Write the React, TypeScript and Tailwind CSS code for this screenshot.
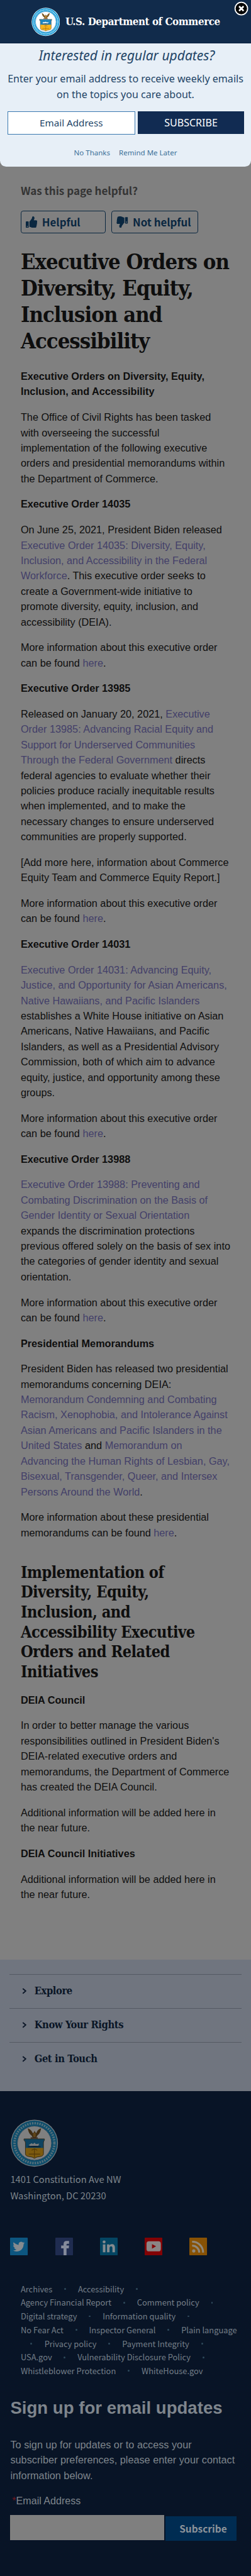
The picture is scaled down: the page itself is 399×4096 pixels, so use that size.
import React from "react";
import { FaThumbsUp, FaThumbsDown } from "react-icons/fa";

const sans = "font-['Liberation_Sans',Arial,sans-serif]";
const serif = "font-['DejaVu_Serif_Condensed','DejaVu_Serif',serif]";
const source = "font-['Noto_Sans_CJK_JP','Noto_Sans',sans-serif]";
const open = "font-['Noto_Sans','Open_Sans',sans-serif]";

function Seal({ id, className }: { id: string; className: string }) {
  return (
    <svg viewBox="0 0 100 100" className={className} aria-hidden="true">
      <circle cx="50" cy="50" r="49.5" fill="#e9f6fc" />
      <circle cx="50" cy="50" r="42" fill="none" stroke="#1a9ad6" strokeWidth="11.5" />
      <circle cx="50" cy="50" r="42" fill="none" stroke="#a9def5" strokeWidth="5" strokeDasharray="3 2.2" />
      <circle cx="50" cy="50" r="36.3" fill="#ffffff" />
      <circle cx="50" cy="50" r="36" fill="none" stroke="#1672ab" strokeWidth="1" />
      <path d="M36 19 C39 20 44 23 46.500 29 L49 27 L50 24 L52 27 L54 29 C56 23 60 20 64 19 C63 25 61 31 56 34 L54 38 H46 L44 34 C39 31 37 25 36 19 Z" fill="#7d5a28" />
      <path d="M47 30 L50 27 L53 30 L52 37 H48 Z" fill="#c08a30" />
      <rect x="42" y="38" width="15" height="2.200" fill="#6b3f1c" />
      <clipPath id={id}>
        <path d="M28 41 H71 V44 Q69 46 69 49 V72 Q69 77 63 78 Q53 79 50 82 Q47 79 37 78 Q31 77 31 72 V49 Q31 46 28 44 Z" />
      </clipPath>
      <g clipPath={`url(#${id})`}>
        <rect x="26" y="40" width="48" height="21" fill="#1c86c0" />
        <rect x="26" y="60" width="48" height="24" fill="#f7b51e" />
        <path d="M38 54 L44 50 L47 52 L50 49 L53 52 L60 51 L58 56 H41 Z" fill="#f2f6f8" />
        <path d="M36 57 Q50 54 63 57 V58.500 H36 Z" fill="#123f66" />
        <path d="M50 62 V80 M44 65 L50 62 L56 65 M38 73 H62" stroke="#a06c12" strokeWidth="1.500" fill="none" />
      </g>
      <path d="M28 41 H71 V44 Q69 46 69 49 V72 Q69 77 63 78 Q53 79 50 82 Q47 79 37 78 Q31 77 31 72 V49 Q31 46 28 44 Z" fill="none" stroke="#5a4a2a" strokeWidth="1.200" />
    </svg>
  );
}

function Popup() {
  return (
    <div className={`absolute inset-x-0 top-0 h-[274px] overflow-hidden rounded-b-[10px] bg-[#e7eff7] text-[#234567] ${open}`}>
      <div className="flex h-[71px] items-center border-b-2 border-[#0c2140] bg-[#112b4b] pl-[51.500px]">
        <Seal id="popup-shield" className="mt-[2px] h-[47px] w-[47px] shrink-0" />
        <span className={`ml-[9px] mt-[1px] whitespace-nowrap text-[17.400px] font-bold leading-6 tracking-[-0.450px] text-white ${serif}`}>
          U.S. Department of Commerce
        </span>
      </div>
      <svg viewBox="0 0 24 24" className="absolute right-[4px] top-[2px] h-6 w-6" role="img" aria-label="Close">
        <circle cx="12" cy="12" r="10.300" fill="#000" stroke="#fff" strokeWidth="1.800" />
        <path d="M8.300 8.300 L15.700 15.700 M15.700 8.300 L8.300 15.700" stroke="#fff" strokeWidth="2.800" />
      </svg>
      <p className="mt-[5px] pl-[4px] text-center text-[21.700px] italic leading-[30px]">Interested in regular updates?</p>
      <p className="mt-[11px] text-center text-[16.600px] leading-[25.400px]">
        Enter your email address to receive weekly emails
        <br />
        on the topics you care about.
      </p>
      <div className="mt-[15.500px] flex gap-[4px] pl-[12px] text-center text-[15.700px] leading-[36px]">
        <div className="h-[38px] w-[210px] border border-[#3b79b0] bg-white">Email Address</div>
        <div className="h-[37px] w-[175px] bg-[#112b52] text-[16.600px] leading-[38px] text-white">SUBSCRIBE</div>
      </div>
      <div className="mt-[19.500px] flex justify-center gap-[14.500px] text-[11.900px] leading-5 text-[#3d7199]">
        <span>No Thanks</span>
        <span>Remind Me Later</span>
      </div>
    </div>
  );
}

const A = ({ children }: { children: React.ReactNode }) => <a className="text-[#433f69]">{children}</a>;
const B = ({ children }: { children: React.ReactNode }) => <p className="font-bold">{children}</p>;

function MoreInfo() {
  return (
    <p>
      More information about this executive order can be found <A>here</A>.
    </p>
  );
}

function Article() {
  return (
    <main className="h-[3218px] pl-[34px] pr-[33px] pt-[301px] text-[#0e0e0e]">
      <h2 className={`text-[17.600px] font-bold leading-6 text-[#343434] ${source}`}>Was this page helpful?</h2>
      <div className={`mt-[21px] flex gap-[9px] text-[17.400px] font-bold leading-[33px] text-[#0a2740] ${source}`}>
        <div className="flex h-[37px] w-[140px] items-center rounded-[4px] border-2 border-[#0a2740] pl-[7px]">
          <FaThumbsUp className="mr-[8px] h-[19px] w-[19px]" />
          <span>Helpful</span>
        </div>
        <div className="flex h-[37px] w-[142px] items-center rounded-[4px] border-2 border-[#0a2740] pl-[7px]">
          <FaThumbsDown className="mr-[8px] h-[19px] w-[19px] -scale-x-100" />
          <span className="whitespace-nowrap">Not helpful</span>
        </div>
      </div>
      <h1 className={`mb-[23px] mt-[24.500px] whitespace-nowrap text-[35.500px] font-bold leading-[43.700px] tracking-[-1px] ${serif}`}>
        Executive Orders on
        <br />
        Diversity, Equity,
        <br />
        Inclusion and
        <br />
        Accessibility
      </h1>
      <div className={`flex flex-col gap-[16.800px] text-[16.800px] leading-[25.200px] ${sans}`}>
        <B>Executive Orders on Diversity, Equity, Inclusion, and Accessibility</B>
        <p>
          The Office of Civil Rights has been tasked with overseeing the successful implementation of the following
          executive orders and presidential memorandums within the Department of Commerce.
        </p>
        <B>Executive Order 14035</B>
        <p>
          On June 25, 2021, President Biden released{" "}
          <A>Executive Order 14035: Diversity, Equity, Inclusion, and Accessibility in the Federal Workforce</A>. This
          executive order seeks to create a Government-wide initiative to promote diversity, equity, inclusion, and
          accessibility (DEIA).
        </p>
        <MoreInfo />
        <B>Executive Order 13985</B>
        <p>
          Released on January 20, 2021,{" "}
          <A>
            Executive Order 13985: Advancing Racial Equity and Support for Underserved Communities Through the Federal
            Government
          </A>{" "}
          directs federal agencies to evaluate whether their policies produce racially inequitable results when
          implemented, and to make the necessary changes to ensure underserved communities are properly supported.
        </p>
        <p>[Add more here, information about Commerce Equity Team and Commerce Equity Report.]</p>
        <MoreInfo />
        <B>Executive Order 14031</B>
        <p>
          <A>
            Executive Order 14031: Advancing Equity, Justice, and Opportunity for Asian Americans, Native Hawaiians, and
            Pacific Islanders
          </A>{" "}
          establishes a White House initiative on Asian Americans, Native Hawaiians, and Pacific Islanders, as well as a
          Presidential Advisory Commission, both of which aim to advance equity, justice, and opportunity among these
          groups.
        </p>
        <MoreInfo />
        <B>Executive Order 13988</B>
        <p>
          <A>
            Executive Order 13988: Preventing and Combating Discrimination on the Basis of Gender Identity or Sexual
            Orientation
          </A>{" "}
          expands the discrimination protections previous offered solely on the basis of sex into the categories of
          gender identity and sexual orientation.
        </p>
        <MoreInfo />
        <B>Presidential Memorandums</B>
        <p>
          President Biden has released two presidential memorandums concerning DEIA:
          <br />
          <A>
            Memorandum Condemning and Combating Racism, Xenophobia, and Intolerance Against Asian Americans and Pacific
            Islanders in the United States
          </A>{" "}
          and{" "}
          <A>
            Memorandum on Advancing the Human Rights of Lesbian, Gay, Bisexual, Transgender, Queer, and Intersex Persons
            Around the World
          </A>
          .
        </p>
        <p>
          More information about these presidential memorandums can be found <A>here</A>.
        </p>
        <h2 className={`mt-[20px] whitespace-nowrap text-[26px] font-bold leading-[32.700px] tracking-[-0.540px] ${serif}`}>
          Implementation of
          <br />
          Diversity, Equity,
          <br />
          Inclusion, and
          <br />
          Accessibility Executive
          <br />
          Orders and Related
          <br />
          Initiatives
        </h2>
        <B>DEIA Council</B>
        <p>
          In order to better manage the various responsibilities outlined in President Biden's DEIA-related executive
          orders and memorandums, the Department of Commerce has created the DEIA Council.
        </p>
        <p>Additional information will be added here in the near future.</p>
        <B>DEIA Council Initiatives</B>
        <p>Additional information will be added here in the near future.</p>
      </div>
    </main>
  );
}

function FooterNav() {
  return (
    <nav className={`h-[216px] bg-[#70757f] px-4 pt-[24px] text-[17px] font-bold tracking-[-0.450px] text-[#0a1526] ${serif}`}>
      {["Explore", "Know Your Rights", "Get in Touch"].map((label) => (
        <div key={label} className="flex h-[55.800px] items-center border-t border-[#555a63] pb-[1px] pl-[20px]">
          <svg viewBox="0 0 8 10" className="mr-[12.500px] h-[10px] w-[8px]" aria-hidden="true">
            <path d="M1.300 1 L6 5 L1.300 9" fill="none" stroke="#0a1526" strokeWidth="1.900" />
          </svg>
          <span>{label}</span>
        </div>
      ))}
    </nav>
  );
}

const tile = "h-[29px] w-[29px] shrink-0";

function Social() {
  return (
    <div className="mt-[56px] flex gap-[44.600px]">
      <svg viewBox="0 0 29 29" className={tile} aria-label="Twitter">
        <rect width="29" height="29" rx="1" fill="#0d5680" />
        <g transform="translate(4.500 5) scale(0.820)">
          <path fill="#858b8f" d="M23.950 4.570a10 10 0 0 1-2.820.770 4.960 4.960 0 0 0 2.160-2.720c-.950.550-2 .950-3.130 1.180a4.920 4.920 0 0 0-8.380 4.480C7.690 8.090 4.070 6.130 1.640 3.160a4.820 4.820 0 0 0-.670 2.480c0 1.710.870 3.210 2.190 4.100a4.900 4.900 0 0 1-2.230-.620v.060a4.920 4.920 0 0 0 3.950 4.830 5 5 0 0 1-2.210.080 4.940 4.940 0 0 0 4.600 3.420A9.870 9.870 0 0 1 0 19.540a13.990 13.990 0 0 0 7.550 2.210c9.050 0 14-7.500 14-13.980 0-.210 0-.420-.020-.630a9.940 9.940 0 0 0 2.460-2.550z" />
        </g>
      </svg>
      <svg viewBox="0 0 29 29" className={tile} aria-label="Facebook">
        <rect width="29" height="29" rx="1" fill="#1f2c50" />
        <path d="M13.500 29 V17.500 H9.500 V13 H13.500 V10.500 Q13.500 5.500 18.500 5.500 H22.500 V10 H20 Q18.300 10 18.300 11.500 V13 H22.500 L22 17.500 H18.300 V29 Z" fill="#858b9b" />
      </svg>
      <svg viewBox="0 0 29 29" className={tile} aria-label="LinkedIn">
        <rect width="29" height="29" rx="1" fill="#044562" />
        <g fill="#858b8f">
          <circle cx="6.700" cy="7" r="2.400" />
          <path d="M4.700 11 H8.800 V24 H4.700 Z M11.500 11 H15.400 V12.800 Q16.700 10.700 19.600 10.700 Q24.500 10.700 24.500 16.500 V24 H20.400 V17.300 Q20.400 14.300 18.200 14.300 Q15.600 14.300 15.600 17.500 V24 H11.500 Z" />
        </g>
      </svg>
      <svg viewBox="0 0 29 29" className={tile} aria-label="YouTube">
        <rect width="29" height="29" rx="1" fill="#830305" />
        <rect x="3" y="6" width="23.500" height="16.500" rx="4" fill="#8b8585" />
        <path d="M12 10.500 L18.700 14.300 L12 18.100 Z" fill="#830305" />
      </svg>
      <svg viewBox="0 0 29 29" className={tile} aria-label="RSS">
        <rect width="29" height="29" rx="1" fill="#885204" />
        <g fill="none" stroke="#8f877a" strokeWidth="3.200">
          <path d="M4.500 6.700 A17.500 17.500 0 0 1 22.500 24.500" />
          <path d="M4.500 13.200 A11.200 11.200 0 0 1 16.200 24.500" />
        </g>
        <circle cx="7.200" cy="21.800" r="2.700" fill="#8f877a" />
      </svg>
    </div>
  );
}

const Dot = ({ className = "w-[42px]" }: { className?: string }) => (
  <span className={`flex shrink-0 justify-center ${className}`}>
    <span className="h-[3px] w-[3px] rounded-full bg-[#2f4a5c]" />
  </span>
);

const linkRows: string[][] = [
  ["Archives", "•", "Accessibility", "•"],
  ["Agency Financial Report", "•", "Comment policy", "•"],
  ["Digital strategy", "•", "Information quality", "•"],
  ["No Fear Act", "•", "Inspector General", "•", "Plain language"],
  ["•", "Privacy policy", "•", "Payment Integrity", "•"],
  ["USA.gov", "•", "Vulnerability Disclosure Policy", "•"],
  ["Whistleblower Protection", "•", "WhiteHouse.gov"],
];

function Footer() {
  return (
    <footer className="h-[797px] bg-[#081426] pl-[17px] pt-[46.500px] text-[#7e858c]">
      <Seal id="footer-shield" className="ml-[1px] h-[78px] w-[78px] brightness-50" />
      <address className={`mt-[7px] text-[15.200px] not-italic leading-[26.300px] ${source}`}>
        1401 Constitution Ave NW
        <br />
        Washington, DC 20230
      </address>
      <Social />
      <div className={`mt-[44.500px] pl-[17px] text-[13.300px] text-[#747e88] ${source}`}>
        {linkRows.map((row, r) => (
          <div key={r} className="flex h-[22.430px] items-center whitespace-nowrap leading-[22.400px]">
            {row.map((item, i) =>
              item === "•" ? <Dot key={i} className={i === 0 ? "mr-[4px] w-[35px]" : "w-[42px]"} /> : <span key={i}>{item}</span>,
            )}
          </div>
        ))}
      </div>
      <div className={sans}>
        <h2 className="mt-[33px] text-[28.500px] font-bold leading-[34px]">Sign up for email updates</h2>
        <p className="mt-[30px] whitespace-nowrap text-[16.800px] leading-[25.200px]">
          To sign up for updates or to access your
          <br />
          subscriber preferences, please enter your contact
          <br />
          information below.
        </p>
        <div className="mt-[17px] pl-[3px] text-[16.600px] leading-[25px]">
          <span className="text-[#6e1620]">*</span>
          Email Address
        </div>
      </div>
      <div className="mt-[11px] flex">
        <div className="h-[41.500px] w-[253px] bg-[#7f7f7f]" />
        <div className={`ml-[2px] mt-[2px] h-[40px] w-[116px] bg-[#002c52] pl-[22.500px] text-[16px] font-bold leading-[41px] text-[#8c939a] ${source}`}>
          Subscribe
        </div>
      </div>
    </footer>
  );
}

export default function App() {
  return (
    <div className="relative h-[4231px] w-[412.100px] overflow-hidden bg-[#808080] [zoom:0.9683]">
      <Article />
      <FooterNav />
      <Footer />
      <Popup />
    </div>
  );
}
